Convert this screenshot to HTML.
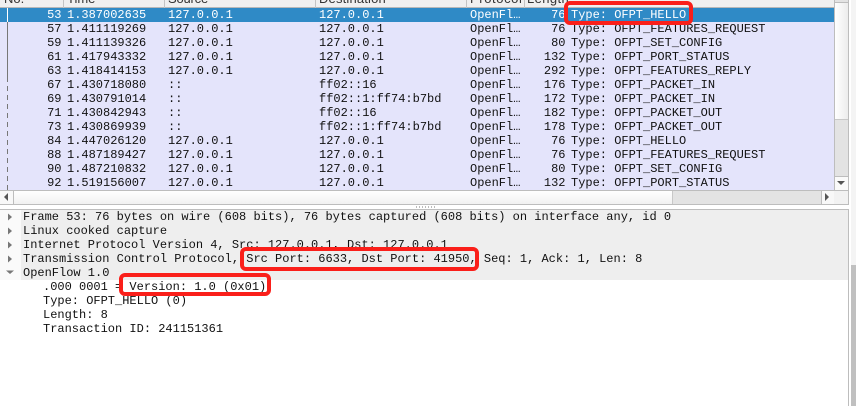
<!DOCTYPE html>
<html>
<head>
<meta charset="utf-8">
<style>
html,body{margin:0;padding:0;background:#fff}
body{width:856px;height:406px;position:relative;overflow:hidden;font-family:"Liberation Mono",monospace;font-size:12px;color:#111}
div{position:absolute;box-sizing:border-box}
.t{white-space:pre;line-height:14px;height:14px}
.h{font-family:"Liberation Sans",sans-serif;font-size:13px;color:#333;top:-8px}
.r{text-align:right}
.w{color:#fff}
.red{border:4px solid #fa1f1a;border-radius:6px}
</style>
</head>
<body>
<!-- header -->
<div style="left:0;top:0;width:834px;height:8px;background:#f0f0f0;border-bottom:1px solid #b8b8b8"></div>
<div class="t h" style="left:4px">No.</div>
<div class="t h" style="left:67px">Time</div>
<div class="t h" style="left:168px;letter-spacing:-.2px">Source</div>
<div class="t h" style="left:319px;letter-spacing:.17px">Destination</div>
<div class="t h" style="left:470px;letter-spacing:.6px">Protocol</div>
<div class="t h" style="left:527px;letter-spacing:.4px">Length</div>
<div style="left:63px;top:0;width:1px;height:8px;background:#c4c4c4"></div>
<div style="left:164px;top:0;width:1px;height:8px;background:#c4c4c4"></div>
<div style="left:315px;top:0;width:1px;height:8px;background:#c4c4c4"></div>
<div style="left:466px;top:0;width:1px;height:8px;background:#c4c4c4"></div>
<div style="left:524px;top:0;width:1px;height:8px;background:#c4c4c4"></div>
<!-- list background -->
<div style="left:0;top:8px;width:834px;height:183px;background:#e4e4fb"></div>
<div style="left:0;top:8px;width:834px;height:14px;background:#2f8ac6"></div>
<!-- related line -->
<div style="left:7px;top:8px;width:1px;height:14px;background:#fff"></div>
<div style="left:7px;top:22px;width:1px;height:55px;background:#777"></div>
<div style="left:7px;top:77px;width:1px;height:114px;background:repeating-linear-gradient(to bottom,#777 0,#777 5px,transparent 5px,transparent 9px)"></div>
<!-- No column -->
<div class="t r w" style="left:20px;top:8px;width:41.5px">53</div>
<div class="t r" style="left:20px;top:22px;width:41.5px">57</div>
<div class="t r" style="left:20px;top:36px;width:41.5px">59</div>
<div class="t r" style="left:20px;top:50px;width:41.5px">61</div>
<div class="t r" style="left:20px;top:64px;width:41.5px">63</div>
<div class="t r" style="left:20px;top:78px;width:41.5px">67</div>
<div class="t r" style="left:20px;top:92px;width:41.5px">69</div>
<div class="t r" style="left:20px;top:106px;width:41.5px">71</div>
<div class="t r" style="left:20px;top:120px;width:41.5px">73</div>
<div class="t r" style="left:20px;top:134px;width:41.5px">84</div>
<div class="t r" style="left:20px;top:148px;width:41.5px">88</div>
<div class="t r" style="left:20px;top:162px;width:41.5px">90</div>
<div class="t r" style="left:20px;top:176px;width:41.5px">92</div>
<!-- Time -->
<div class="t w" style="left:67px;top:8px">1.387002635</div>
<div class="t" style="left:67px;top:22px">1.411119269</div>
<div class="t" style="left:67px;top:36px">1.411139326</div>
<div class="t" style="left:67px;top:50px">1.417943332</div>
<div class="t" style="left:67px;top:64px">1.418414153</div>
<div class="t" style="left:67px;top:78px">1.430718080</div>
<div class="t" style="left:67px;top:92px">1.430791014</div>
<div class="t" style="left:67px;top:106px">1.430842943</div>
<div class="t" style="left:67px;top:120px">1.430869939</div>
<div class="t" style="left:67px;top:134px">1.447026120</div>
<div class="t" style="left:67px;top:148px">1.487189427</div>
<div class="t" style="left:67px;top:162px">1.487210832</div>
<div class="t" style="left:67px;top:176px">1.519156007</div>
<!-- Source -->
<div class="t w" style="left:168px;top:8px">127.0.0.1</div>
<div class="t" style="left:168px;top:22px">127.0.0.1</div>
<div class="t" style="left:168px;top:36px">127.0.0.1</div>
<div class="t" style="left:168px;top:50px">127.0.0.1</div>
<div class="t" style="left:168px;top:64px">127.0.0.1</div>
<div class="t" style="left:168px;top:78px">::</div>
<div class="t" style="left:168px;top:92px">::</div>
<div class="t" style="left:168px;top:106px">::</div>
<div class="t" style="left:168px;top:120px">::</div>
<div class="t" style="left:168px;top:134px">127.0.0.1</div>
<div class="t" style="left:168px;top:148px">127.0.0.1</div>
<div class="t" style="left:168px;top:162px">127.0.0.1</div>
<div class="t" style="left:168px;top:176px">127.0.0.1</div>
<!-- Destination -->
<div class="t w" style="left:319px;top:8px">127.0.0.1</div>
<div class="t" style="left:319px;top:22px">127.0.0.1</div>
<div class="t" style="left:319px;top:36px">127.0.0.1</div>
<div class="t" style="left:319px;top:50px">127.0.0.1</div>
<div class="t" style="left:319px;top:64px">127.0.0.1</div>
<div class="t" style="left:319px;top:78px">ff02::16</div>
<div class="t" style="left:319px;top:92px">ff02::1:ff74:b7bd</div>
<div class="t" style="left:319px;top:106px">ff02::16</div>
<div class="t" style="left:319px;top:120px">ff02::1:ff74:b7bd</div>
<div class="t" style="left:319px;top:134px">127.0.0.1</div>
<div class="t" style="left:319px;top:148px">127.0.0.1</div>
<div class="t" style="left:319px;top:162px">127.0.0.1</div>
<div class="t" style="left:319px;top:176px">127.0.0.1</div>
<!-- Protocol -->
<div class="t w" style="left:470px;top:8px">OpenFl…</div>
<div class="t" style="left:470px;top:22px">OpenFl…</div>
<div class="t" style="left:470px;top:36px">OpenFl…</div>
<div class="t" style="left:470px;top:50px">OpenFl…</div>
<div class="t" style="left:470px;top:64px">OpenFl…</div>
<div class="t" style="left:470px;top:78px">OpenFl…</div>
<div class="t" style="left:470px;top:92px">OpenFl…</div>
<div class="t" style="left:470px;top:106px">OpenFl…</div>
<div class="t" style="left:470px;top:120px">OpenFl…</div>
<div class="t" style="left:470px;top:134px">OpenFl…</div>
<div class="t" style="left:470px;top:148px">OpenFl…</div>
<div class="t" style="left:470px;top:162px">OpenFl…</div>
<div class="t" style="left:470px;top:176px">OpenFl…</div>
<!-- Length -->
<div class="t r w" style="left:525px;top:8px;width:40.5px">76</div>
<div class="t r" style="left:525px;top:22px;width:40.5px">76</div>
<div class="t r" style="left:525px;top:36px;width:40.5px">80</div>
<div class="t r" style="left:525px;top:50px;width:40.5px">132</div>
<div class="t r" style="left:525px;top:64px;width:40.5px">292</div>
<div class="t r" style="left:525px;top:78px;width:40.5px">176</div>
<div class="t r" style="left:525px;top:92px;width:40.5px">172</div>
<div class="t r" style="left:525px;top:106px;width:40.5px">182</div>
<div class="t r" style="left:525px;top:120px;width:40.5px">178</div>
<div class="t r" style="left:525px;top:134px;width:40.5px">76</div>
<div class="t r" style="left:525px;top:148px;width:40.5px">76</div>
<div class="t r" style="left:525px;top:162px;width:40.5px">80</div>
<div class="t r" style="left:525px;top:176px;width:40.5px">132</div>
<!-- Info -->
<div class="t w" style="left:571px;top:8px">Type: OFPT_HELLO</div>
<div class="t" style="left:571px;top:22px">Type: OFPT_FEATURES_REQUEST</div>
<div class="t" style="left:571px;top:36px">Type: OFPT_SET_CONFIG</div>
<div class="t" style="left:571px;top:50px">Type: OFPT_PORT_STATUS</div>
<div class="t" style="left:571px;top:64px">Type: OFPT_FEATURES_REPLY</div>
<div class="t" style="left:571px;top:78px">Type: OFPT_PACKET_IN</div>
<div class="t" style="left:571px;top:92px">Type: OFPT_PACKET_IN</div>
<div class="t" style="left:571px;top:106px">Type: OFPT_PACKET_OUT</div>
<div class="t" style="left:571px;top:120px">Type: OFPT_PACKET_OUT</div>
<div class="t" style="left:571px;top:134px">Type: OFPT_HELLO</div>
<div class="t" style="left:571px;top:148px">Type: OFPT_FEATURES_REQUEST</div>
<div class="t" style="left:571px;top:162px">Type: OFPT_SET_CONFIG</div>
<div class="t" style="left:571px;top:176px">Type: OFPT_PORT_STATUS</div>
<!-- vertical scrollbar of list -->
<div style="left:834px;top:0;width:15px;height:205px;background:#e3e3e3;border-left:1px solid #bdbdbd;border-right:1px solid #bdbdbd"></div>
<div style="left:835px;top:2px;width:13px;height:118px;background:linear-gradient(to right,#fff,#ececec);border-top:1px solid #bdbdbd;border-bottom:1px solid #c8c8c8"></div>
<div style="left:834px;top:176px;width:15px;height:15px;background:#fafafa;border:1px solid #bdbdbd"></div>
<svg style="position:absolute;left:834px;top:176px" width="15" height="15"><path d="M3 5h8l-4 4z" fill="#555"/></svg>
<!-- horizontal scrollbar -->
<div style="left:0;top:190px;width:849px;height:15px;background:#e3e3e3;border-top:1px solid #bdbdbd;border-bottom:1px solid #bdbdbd"></div>
<div style="left:13px;top:191px;width:660px;height:13px;background:linear-gradient(#fff,#f1f1f1);border-right:1px solid #c8c8c8"></div>
<div style="left:0;top:191px;width:14px;height:13px;background:#f8f8f8;border-right:1px solid #bdbdbd"></div>
<svg style="position:absolute;left:0;top:191px" width="14" height="13"><path d="M8 2v8l-4-4z" fill="#555"/></svg>
<div style="left:821px;top:191px;width:14px;height:13px;background:#f8f8f8;border-left:1px solid #bdbdbd;border-right:1px solid #bdbdbd"></div>
<svg style="position:absolute;left:821px;top:191px" width="14" height="13"><path d="M4 2v8l4-4z" fill="#555"/></svg>
<div style="left:834px;top:191px;width:15px;height:13px;background:#f2f2f2;border-right:1px solid #bdbdbd"></div>
<!-- splitter dots -->
<div style="left:416px;top:206px;width:20px;height:2px;background:repeating-linear-gradient(to right,#bbb 0,#bbb 1px,transparent 1px,transparent 3px)"></div>
<!-- details pane -->
<div style="left:0;top:209px;width:849px;height:197px;background:#fff;border-top:1px solid #bdbdbd;border-right:1px solid #bdbdbd"></div>
<div style="left:21px;top:210px;width:827px;height:70px;background:#eeeeee"></div>
<div style="left:0;top:210px;width:21px;height:70px;background:#fafafa"></div>
<svg style="position:absolute;left:0;top:210px" width="20" height="72">
<path d="M8 3.500v7l4-3.500z" fill="#777"/><path d="M8 17.500v7l4-3.500z" fill="#777"/><path d="M8 31.500v7l4-3.500z" fill="#777"/><path d="M8 45.500v7l4-3.500z" fill="#777"/><path d="M6 60.500h8l-4 3.500z" fill="#777"/>
</svg>
<div class="t" style="left:23px;top:210px">Frame 53: 76 bytes on wire (608 bits), 76 bytes captured (608 bits) on interface any, id 0</div>
<div class="t" style="left:23px;top:224px">Linux cooked capture</div>
<div class="t" style="left:23px;top:238px">Internet Protocol Version 4, Src: 127.0.0.1, Dst: 127.0.0.1</div>
<div class="t" style="left:23px;top:252px">Transmission Control Protocol, Src Port: 6633, Dst Port: 41950, Seq: 1, Ack: 1, Len: 8</div>
<div class="t" style="left:23px;top:266px">OpenFlow 1.0</div>
<div class="t" style="left:43px;top:280px">.000 0001 = Version: 1.0 (0x01)</div>
<div class="t" style="left:43px;top:294px">Type: OFPT_HELLO (0)</div>
<div class="t" style="left:43px;top:308px">Length: 8</div>
<div class="t" style="left:43px;top:322px">Transaction ID: 241151361</div>
<!-- outer scrollbar -->
<div style="left:851px;top:0;width:5px;height:265px;background:#f4f4f4"></div>
<div style="left:851px;top:265px;width:5px;height:141px;background:#c0c0c0"></div>
<!-- red annotation boxes -->
<div class="red" style="left:564px;top:1px;width:129px;height:24px"></div>
<div class="red" style="left:240px;top:247px;width:239px;height:24px"></div>
<div class="red" style="left:119px;top:273px;width:152px;height:23px"></div>
</body>
</html>
